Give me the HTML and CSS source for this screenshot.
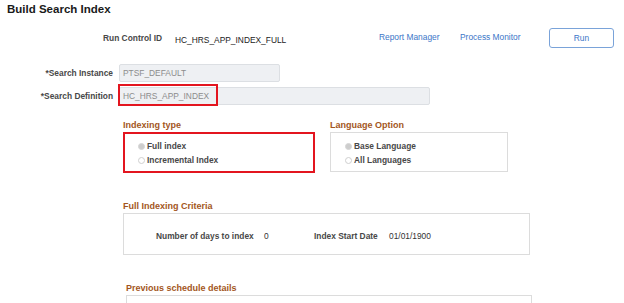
FILE: index.html
```html
<!DOCTYPE html>
<html lang="en">
<head>
    <meta charset="UTF-8">
    <meta name="viewport" content="width=device-width, initial-scale=1.0">
    <title>Build Search Index</title>
    <link rel="stylesheet" href="styles.css">
</head>
<body>
    <h1>Build Search Index</h1>

    <!-- Run control bar -->
    <div class="run-bar">
        <span class="label run-label">Run Control ID</span>
        <span class="run-value">HC_HRS_APP_INDEX_FULL</span>
        <a class="link report-link" href="#">Report Manager</a>
        <a class="link monitor-link" href="#">Process Monitor</a>
        <button class="run-btn">Run</button>
    </div>

    <!-- Search fields -->
    <div class="field-row">
        <label class="label field-label">*Search Instance</label>
        <div class="input short">PTSF_DEFAULT</div>
    </div>
    <div class="field-row">
        <label class="label field-label">*Search Definition</label>
        <div class="input long">HC_HRS_APP_INDEX</div>
        <div class="highlight def-highlight"></div>
    </div>

    <!-- Option groups -->
    <div class="options">
        <div class="group indexing">
            <div class="group-title">Indexing type</div>
            <div class="group-box marked">
                <div class="radio-row"><span class="radio on"></span><span class="label">Full index</span></div>
                <div class="radio-row"><span class="radio"></span><span class="label">Incremental Index</span></div>
            </div>
        </div>
        <div class="group language">
            <div class="group-title">Language Option</div>
            <div class="group-box">
                <div class="radio-row"><span class="radio on"></span><span class="label">Base Language</span></div>
                <div class="radio-row"><span class="radio"></span><span class="label">All Languages</span></div>
            </div>
        </div>
    </div>

    <!-- Full indexing criteria -->
    <div class="section criteria">
        <div class="group-title">Full Indexing Criteria</div>
        <div class="group-box criteria-box">
            <span class="label days-label">Number of days to index</span>
            <span class="value days-value">0</span>
            <span class="label date-label">Index Start Date</span>
            <span class="value">01/01/1900</span>
        </div>
    </div>

    <!-- Previous schedule -->
    <div class="section schedule">
        <div class="group-title">Previous schedule details</div>
        <div class="group-box schedule-box"></div>
    </div>
</body>
</html>
```

FILE: styles.css
```css
* {
    box-sizing: border-box;
    margin: 0;
    padding: 0;
}

body {
    font-family: "Liberation Sans", Arial, sans-serif;
    background: #fff;
    color: #333;
    overflow: hidden;
}

h1 {
    font-size: 11.5px;
    line-height: 14px;
    font-weight: bold;
    color: #1a1a1a;
    padding: 2px 0 0 7px;
}

.label {
    font-size: 8.4px;
    line-height: 10px;
    font-weight: bold;
    color: #484848;
}

.value {
    font-size: 8.4px;
    line-height: 10px;
    color: #333;
}

/* Run control bar */
.run-bar {
    display: flex;
    align-items: flex-start;
    height: 20px;
    margin-top: 12px;
    padding-left: 103px;
}

.run-label {
    width: 72px;
    padding-top: 5px;
}

.run-value {
    width: 204px;
    font-size: 8.4px;
    line-height: 10px;
    color: #222;
    padding-top: 7px;
}

.link {
    font-size: 8.4px;
    line-height: 10px;
    color: #3b76c8;
    text-decoration: none;
    padding-top: 4px;
}

.report-link {
    width: 81px;
}

.monitor-link {
    width: 89px;
}

.run-btn {
    width: 65px;
    height: 20px;
    border: 1px solid #7aa3d9;
    border-radius: 3px;
    background: #fff;
    color: #3b76c8;
    font-family: inherit;
    font-size: 8.4px;
}

/* Search fields */
.field-row {
    position: relative;
    display: flex;
    align-items: center;
    gap: 6px;
    height: 18px;
    margin-top: 5px;
}

.run-bar + .field-row {
    margin-top: 16px;
}

.field-label {
    width: 113px;
    text-align: right;
}

.input {
    height: 18px;
    background: #eef0f3;
    border: 1px solid #dcdfe3;
    border-radius: 2px;
    font-size: 8.4px;
    line-height: 16px;
    color: #8c8c8c;
    padding-left: 3px;
}

.input.short {
    width: 161px;
}

.input.long {
    width: 311px;
}

.highlight {
    position: absolute;
    left: 118px;
    top: -3px;
    width: 100px;
    height: 22px;
    border: 2px solid #e3151f;
}

/* Option groups */
.options {
    display: flex;
    gap: 15px;
    margin-top: 15px;
    padding-left: 123px;
}

.group-title {
    font-size: 9px;
    line-height: 11px;
    font-weight: bold;
    color: #a3561d;
    margin-bottom: 1px;
}

.group-box {
    border: 1px solid #dcdcdc;
    background: #fff;
}

.group-box.marked {
    border: 2px solid #e3151f;
}

.indexing .group-box {
    width: 192px;
    height: 41px;
    padding: 5px 0 0 13px;
}

.language .group-box {
    width: 178px;
    height: 40px;
    padding: 6px 0 0 14px;
}

.radio-row {
    display: flex;
    align-items: center;
    gap: 2px;
    height: 14px;
}

.radio {
    width: 7px;
    height: 7px;
    border-radius: 50%;
    border: 1px solid #cfcfcf;
    background: #fff;
}

.radio.on {
    background: #cdcdcd;
    border-color: #d6d6d6;
}

/* Criteria and schedule */
.section {
    margin-top: 28px;
    padding-left: 123px;
}

.criteria-box {
    display: flex;
    align-items: center;
    width: 407px;
    height: 42px;
    padding: 3px 0 0 32px;
}

.days-label {
    width: 108px;
}

.days-value {
    width: 50px;
}

.date-label {
    width: 75px;
}

.schedule {
    padding-left: 126px;
}

.schedule-box {
    width: 406px;
    height: 8px;
    border-bottom: none;
}
```
